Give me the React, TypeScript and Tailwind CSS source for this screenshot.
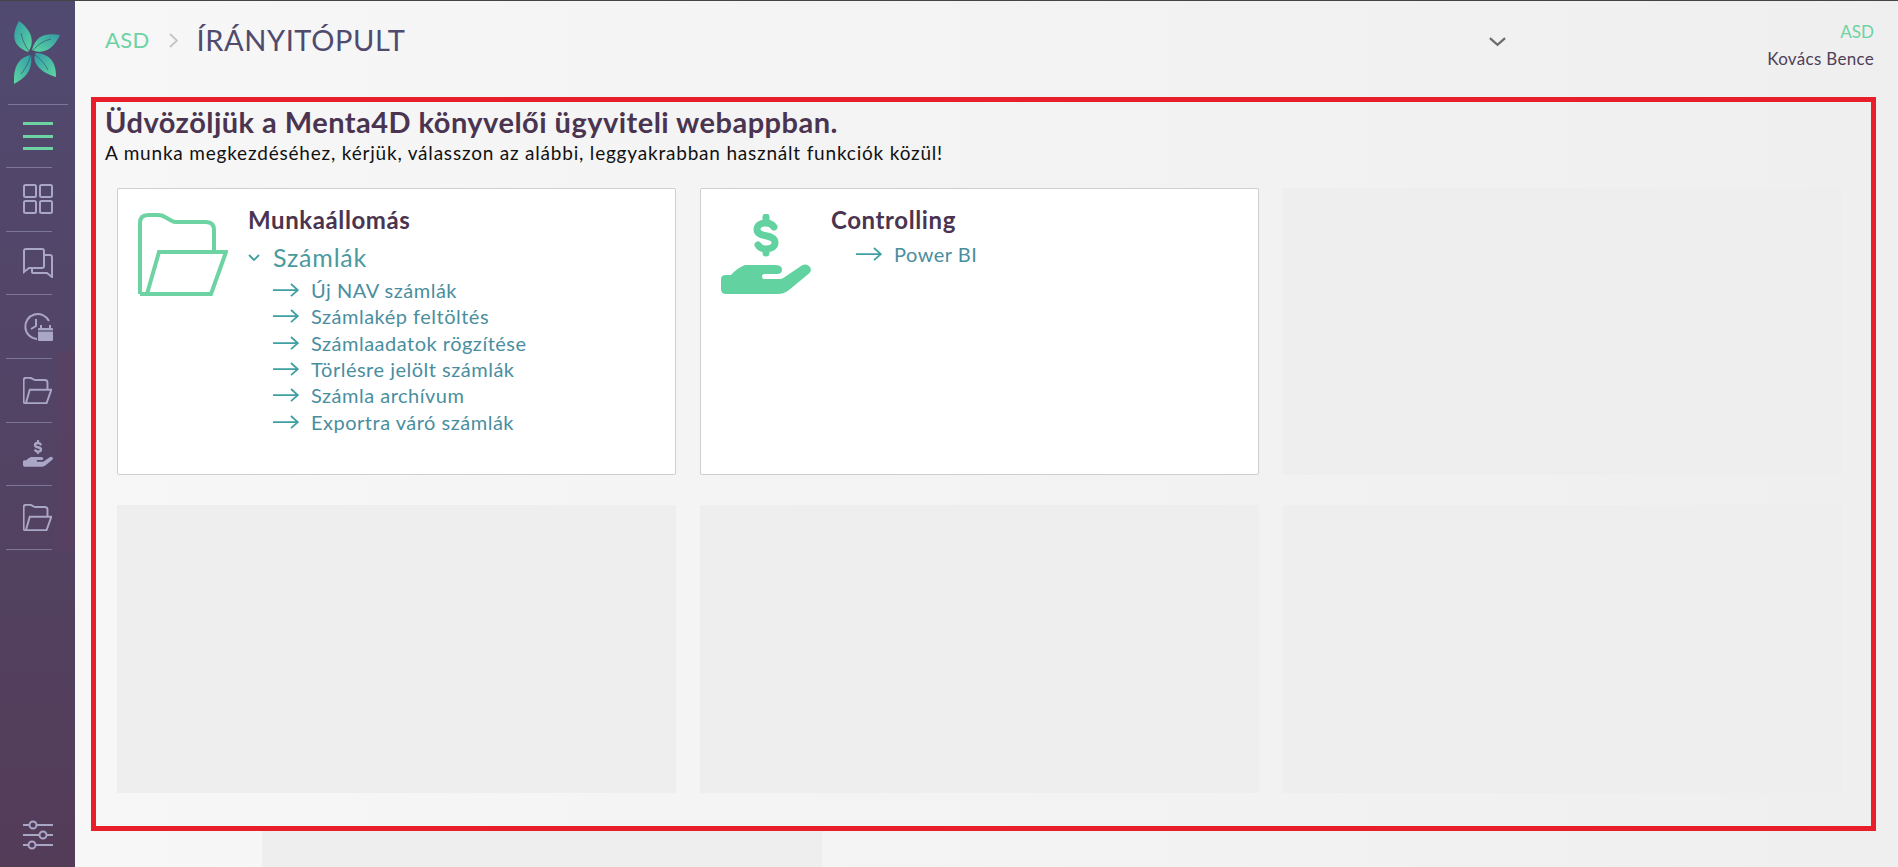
import type { ReactNode } from "react";

const MINT = "#6dd3a2";
const SIDE_ICON = "#a9a6c6";

function FolderIcon({ color, strokeWidth, className }: { color: string; strokeWidth: number; className: string }) {
  return (
    <svg viewBox="0 0 90 83" fill="none" stroke={color} strokeWidth={strokeWidth} className={className}>
      <path d="M2 81V10Q2 2 10 2H20Q24 2 27 4L34 8Q36 9 38 9H68Q76 9 76 17V39" />
      <path d="M2 81H73L88 39H21L9 81" />
    </svg>
  );
}

function MoneyHandIcon({ color, className }: { color: string; className: string }) {
  return (
    <svg viewBox="0 0 90 81" fill="none" className={className}>
      <path
        fill={color}
        d="M0 65Q0 61 5 61H10Q16 54 24 51H54Q61 51 61 55.500Q61 60 56 60H43Q41 60 41 62.500Q41 65 43 65H58Q61 65 63 63.500L80 52Q85 49 88.500 52.500Q91.500 56 88 59.500L68 76Q63 80 57 80H5Q0 80 0 75Z"
      />
      <path
        stroke={color}
        strokeWidth="7"
        strokeLinecap="round"
        d="M53 13C51 10 48 9 45 9C40 9 36 11 36 15.500C36 24.500 54 19 54 28.500C54 33 50 35 45 35C42 35 39 34 37 31M45 3V9M45 35V39"
      />
    </svg>
  );
}

function Arrow() {
  return (
    <svg viewBox="0 0 26 14" fill="none" stroke="#3f9fa3" strokeWidth="1.800" className="w-[26px] h-[14px] shrink-0">
      <path d="M0 7.200H24.500M18 1L24.800 7.200L18 13.200" />
    </svg>
  );
}

function Logo() {
  return (
    <svg viewBox="14 21 46 63" className="w-[46px] h-[63px]">
      <defs>
        <linearGradient id="leaf" x1="0" y1="1" x2="1" y2="0">
          <stop offset="0" stopColor="#5ed7a2" />
          <stop offset="1" stopColor="#329aa6" />
        </linearGradient>
        <linearGradient id="leaf2" x1="0" y1="0" x2="1" y2="1">
          <stop offset="0" stopColor="#329aa6" />
          <stop offset="1" stopColor="#5ed7a2" />
        </linearGradient>
      </defs>
      <path fill="url(#leaf2)" d="M19 21C12 33 11 46 28 52C34 44 34 32 19 21Z" />
      <path fill="url(#leaf)" d="M60 35C46 33 36 35 32 50C41 54 52 52 60 35Z" />
      <path fill="url(#leaf2)" d="M56 77C56 66 53 54 36 53C31 60 38 72 56 77Z" />
      <path fill="url(#leaf)" d="M14 84C13 68 18 57 31 55C33 70 26 78 14 84Z" />
      <path
        fill="none"
        stroke="#35526f"
        strokeWidth="0.700"
        d="M21 33C23 42 26 48 31 53M51 39C42 41 36 46 31 53M48 70C44 62 38 56 31 53M31 53C30 60 26 68 21 74"
      />
    </svg>
  );
}

function SideItem({ children }: { children: ReactNode }) {
  return (
    <div className="h-[63.67px] w-[46px] ml-[6px] pl-[17px] flex items-center border-b border-[#7c7699] shrink-0">
      {children}
    </div>
  );
}

function Sidebar() {
  return (
    <aside className="relative w-[75px] shrink-0 flex flex-col bg-gradient-to-b from-[#514a70] to-[#533c58]">
      <div className="absolute left-[58px] right-0 top-[350px] h-[200px] bg-[#5b4061] opacity-50" />
      <div className="h-[104px] ml-[8px] w-[60px] pl-[6px] pt-[20px] border-b border-[#7c7699] shrink-0">
        <Logo />
      </div>
      <div className="h-[63px] w-[46px] ml-[6px] pl-[17px] flex flex-col justify-center gap-[9.500px] border-b border-[#7c7699] shrink-0">
        <div className="h-[3px] w-[30px] shrink-0 bg-[#6dd3a2]" />
        <div className="h-[3px] w-[30px] shrink-0 bg-[#6dd3a2]" />
        <div className="h-[3px] w-[30px] shrink-0 bg-[#6dd3a2]" />
      </div>
      <SideItem>
        <svg viewBox="0 0 30 30" fill="none" stroke={SIDE_ICON} strokeWidth="2" className="w-[30px] h-[30px] shrink-0">
          <rect x="1" y="1" width="12" height="12" rx="1.500" />
          <rect x="17" y="1" width="12" height="12" rx="1.500" />
          <rect x="1" y="17" width="12" height="12" rx="1.500" />
          <rect x="17" y="17" width="12" height="12" rx="1.500" />
        </svg>
      </SideItem>
      <SideItem>
        <svg viewBox="0 0 30 30" fill="none" stroke={SIDE_ICON} strokeWidth="2" className="w-[30px] h-[30px] shrink-0">
          <path d="M21 3Q21 1 19 1H3Q1 1 1 3V24L6 20H19Q21 20 21 18Z" />
          <path d="M21 7H27Q29 7 29 9V29L24 25H11Q9 25 9 24V20" />
        </svg>
      </SideItem>
      <SideItem>
        <svg viewBox="0 0 30 30" fill="none" className="w-[30px] h-[30px] shrink-0">
          <path stroke={SIDE_ICON} strokeWidth="2" d="M26 9A12.500 12.500 0 1 0 14 27" />
          <path stroke={SIDE_ICON} strokeWidth="2" d="M13 7V14L8 17" />
          <rect x="15" y="16" width="15" height="13" rx="1" fill={SIDE_ICON} />
          <path stroke={SIDE_ICON} strokeWidth="2" d="M18 13V17M27 13V17" />
          <path stroke="#51486c" strokeWidth="1.200" d="M15 19H30" />
        </svg>
      </SideItem>
      <SideItem>
        <FolderIcon color={SIDE_ICON} strokeWidth={6} className="w-[29px] h-[27px] shrink-0" />
      </SideItem>
      <SideItem>
        <MoneyHandIcon color={SIDE_ICON} className="w-[30px] h-[27px] shrink-0" />
      </SideItem>
      <SideItem>
        <FolderIcon color={SIDE_ICON} strokeWidth={6} className="w-[29px] h-[27px] shrink-0" />
      </SideItem>
      <div className="mt-auto mb-[17px] pl-[23px]">
        <svg viewBox="0 0 30 30" fill="none" stroke={SIDE_ICON} strokeWidth="2" className="w-[30px] h-[30px]">
          <path d="M0 5H6M14 5H30M0 15H16M24 15H30M0 25H5M13 25H30" />
          <circle cx="10" cy="5" r="3.500" />
          <circle cx="20" cy="15" r="3.500" />
          <circle cx="9" cy="25" r="3.500" />
        </svg>
      </div>
    </aside>
  );
}

function Header() {
  return (
    <header className="h-[96px] shrink-0 flex">
      <div className="pl-[30px] pt-[20px] flex items-start">
        <span className="text-[22px] leading-[38px] text-[#6dd3a2] tracking-[0.3px]">ASD</span>
        <svg viewBox="0 0 9 15" fill="none" stroke="#c4c4c4" strokeWidth="1.800" className="w-[9px] h-[15px] mt-[12px] ml-[20px] mr-[18px]">
          <path d="M1 1L8 7.500L1 14" />
        </svg>
        <span className="text-[29px] leading-[38px] text-[#4f4a6e] tracking-[0.6px]">ÍRÁNYITÓPULT</span>
      </div>
      <div className="ml-auto flex items-start">
        <svg viewBox="0 0 18 10" fill="none" stroke="#6b6b6b" strokeWidth="2.400" className="w-[17px] h-[10px] mt-[36px] mr-[261px]">
          <path d="M1 1L9 8L17 1" />
        </svg>
        <div className="pr-[24px] pt-[19px] text-right">
          <div className="text-[17px] leading-[24px] text-[#6dd3a2]">ASD</div>
          <div className="text-[17px] leading-[30px] text-[#4e4058] tracking-[0.3px]">Kovács Bence</div>
        </div>
      </div>
    </header>
  );
}

function Card({ icon, title, children }: { icon: ReactNode; title: string; children: ReactNode }) {
  return (
    <div className="h-[287px] bg-white border border-[#cfcfcf] rounded-[2px] flex">
      <div className="w-[130px] shrink-0">{icon}</div>
      <div className="pt-[17px]">
        <h3 className="text-[24px] leading-[28px] font-bold text-[#4a3450] tracking-[0.6px]">{title}</h3>
        {children}
      </div>
    </div>
  );
}

function SubLink({ label }: { label: string }) {
  return (
    <div className="flex items-center gap-[12px] h-[26.300px] text-[20px] text-[#4a8e9e] tracking-[0.5px]">
      <Arrow />
      <span>{label}</span>
    </div>
  );
}

const invoiceLinks = [
  "Új NAV számlák",
  "Számlakép feltöltés",
  "Számlaadatok rögzítése",
  "Törlésre jelölt számlák",
  "Számla archívum",
  "Exportra váró számlák",
];

export default function App() {
  return (
    <div className="h-screen overflow-hidden flex flex-col border-t border-[#444] [font-family:Lato,sans-serif]">
      <div className="flex flex-1 min-h-0">
        <Sidebar />
        <main className="flex-1 min-w-0 bg-gradient-to-r from-[#f7f7f7] to-[#efefef]">
          <Header />
          <section className="ml-[16px] w-[1785px] h-[734px] border-[5px] border-[#e81f2b] pl-[21px]">
            <h1 className="-ml-[12px] mt-[2px] text-[29px] leading-[36px] font-bold text-[#4a3450] tracking-[0.47px]">
              Üdvözöljük a Menta4D könyvelői ügyviteli webappban.
            </h1>
            <p className="-ml-[12px] text-[19px] leading-[26px] text-[#111] tracking-[0.8px]">
              A munka megkezdéséhez, kérjük, válasszon az alábbi, leggyakrabban használt funkciók közül!
            </p>
            <div className="mt-[22px] w-[1725px] grid grid-cols-3 gap-x-[24px] gap-y-[30px]">
              <Card
                title="Munkaállomás"
                icon={<FolderIcon color={MINT} strokeWidth={4} className="w-[90px] h-[83px] ml-[20px] mt-[24px]" />}
              >
                <div className="flex items-center mt-[8px] h-[32px]">
                  <svg viewBox="0 0 12 8" fill="none" stroke="#3f9fa3" strokeWidth="1.800" className="w-[12px] h-[8px] mr-[13px]">
                    <path d="M1 1L6 6L11 1" />
                  </svg>
                  <span className="text-[25px] text-[#4a9a9f] tracking-[0.8px]">Számlák</span>
                </div>
                <div className="ml-[25px] mt-[3px]">
                  {invoiceLinks.map((label) => (
                    <SubLink key={label} label={label} />
                  ))}
                </div>
              </Card>
              <Card
                title="Controlling"
                icon={<MoneyHandIcon color="#62d3a0" className="w-[90px] h-[81px] ml-[20px] mt-[25px]" />}
              >
                <div className="ml-[25px] mt-[7px]">
                  <SubLink label="Power BI" />
                </div>
              </Card>
              <div className="h-[287px] bg-[#eeeeee]" />
              <div className="h-[288px] bg-[#eeeeee]" />
              <div className="h-[288px] bg-[#eeeeee]" />
              <div className="h-[288px] bg-[#eeeeee]" />
            </div>
          </section>
          <div className="ml-[187px] w-[560px] h-[36px] bg-[#eeeeee]" />
        </main>
      </div>
    </div>
  );
}
